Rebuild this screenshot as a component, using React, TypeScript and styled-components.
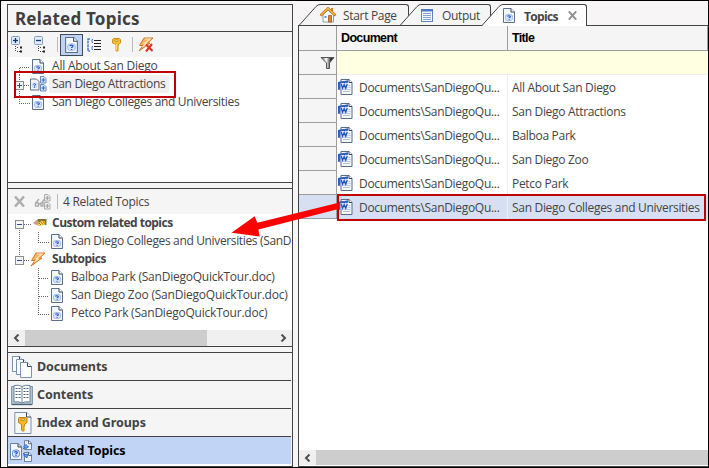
import React from "react";
import styled, { createGlobalStyle, css } from "styled-components";

const LINE = "#434346";
const CHROME = "#f5f5f5";
const RED = "#c00000";

const Global = createGlobalStyle`
  * { box-sizing: border-box; }
  body { margin: 0; background: #000; }
  svg { display: block; flex: none; }
`;

const Window = styled.div`
  position: relative;
  width: 709px;
  height: 468px;
  display: flex;
  gap: 5px;
  padding: 3px 1px 1px 7px;
  border-top: 1px solid #000;
  background: #f8f5f7;
  box-shadow: inset 1px 0 #000, inset -1px 0 #000, inset 0 -1px #000;
  font: 12px "Open Sans", "Noto Sans", sans-serif;
  color: #444;
  overflow: hidden;
`;

/* ---------- icons ---------- */

const TopicIcon = ({ w = 12, h = 15 }: { w?: number; h?: number }) => (
  <svg width={w} height={h} viewBox="0 0 12 15">
    <path d="M.5.5h7.500l3.500 3.500v10.500h-11z" fill="#f4f7fa" stroke="#5b6f88" />
    <path d="M8 .5v3.500h3.500" fill="#fff" stroke="#34485f" />
    <rect x="2.500" y="6.500" width="7" height="6" rx="2" fill="#d5e4fb" stroke="#8fb3ea" strokeWidth=".8" />
    <path d="M4.300 8.300q1.600-1.100 2.900-.2q.6 1-1 1.600v.6M6.100 11.200v.9" fill="none" stroke="#2450c8" strokeWidth="1.100" />
  </svg>
);

const WordIcon = () => (
  <svg width="15" height="16" viewBox="0 0 15 16">
    <path d="M3 .5h8l3 3v12H3z" fill="#f7f9fc" stroke="#586c84" />
    <path d="M11 .5v3h3" fill="#fff" stroke="#34485f" />
    <path d="M5 12.500h7M10 10.500h2.500M10.500 6.500h2M10.500 8.500h2" stroke="#aebfd6" />
    <path d="M0 3l10-1.500v9H0z" fill="#3b70cf" />
    <path d="M0 3l10-1.500v2.300L2.500 4.300V10.500H0z" fill="#2c5cc0" />
    <path d="M2.500 4.300L10 3.800v6.700H2.500z" fill="#dbe7fa" />
    <path d="M3.200 5l1.300 4.300L6.200 5.700l1.500 3.600L9.300 5" fill="none" stroke="#2454b8" strokeWidth="1.300" />
  </svg>
);

const ExpandAllIcon = ({ minus = false }: { minus?: boolean }) => (
  <svg width="13" height="17" viewBox="0 0 13 17">
    <rect x=".5" y=".5" width="8" height="8" rx="1" fill="#e3edfa" stroke="#7f9dc4" />
    <path d="M2 4.500h5" stroke="#12357c" strokeWidth="1.300" />
    {!minus && <path d="M4.500 2v5" stroke="#12357c" strokeWidth="1.300" />}
    <path d="M4 10.500h1M4 12.500h1M4 14.500h1M6 11.500h1M6 15.500h1M8 15.500h1" stroke="#444" />
    <path d="M9 10.500h2v2H9zM9 14.500h2v2H9z" fill="#222" />
  </svg>
);

const ListIcon = () => (
  <svg width="15" height="14" viewBox="0 0 15 14">
    <path d="M3 1H1v12h2" fill="none" stroke="#4e7cc2" strokeWidth="1.500" strokeDasharray="3 .6" />
    <path d="M6 1.500H5v3h1M6 8.500H5v3h1" fill="none" stroke="#5277b0" />
    <path d="M7 2.500h7M7 5.500h7M7 8.500h7M7 11.500h7" stroke="#222" strokeWidth="1.200" />
  </svg>
);

const KeyIcon = () => (
  <svg width="9" height="14" viewBox="0 0 9 14">
    <path d="M1.500.5h6l1 1v3.500l-2 1.500v1.500l-1 1 1 1-1 1 1 1-1.500 1.500-1-1V6.500L.5 5V1.500z" fill="#f8bf28" stroke="#c98a12" strokeWidth=".9" />
    <rect x="3" y="1.800" width="3" height="1.500" rx=".6" fill="#fff6cf" stroke="#9b6a0c" strokeWidth=".6" />
    <path d="M4.300 6v6" stroke="#fff0a6" strokeWidth=".8" />
  </svg>
);

const BoltIcon = ({ crossed = false }: { crossed?: boolean }) => (
  <svg width="16" height="15" viewBox="0 0 16 15">
    <path d="M6 1h9L9.500 6H12L1 14l4-5.500H1.500z" fill="#fcb45c" stroke="#cf6a1e" strokeWidth=".9" />
    <path d="M7 2h5L6.500 6.500 8 7 4.500 10" fill="none" stroke="#ffe7bd" strokeWidth="1.200" />
    {crossed && <path d="M8 7.500l6.500 6.500M14 7l-6 7.500" stroke="#e0301e" strokeWidth="2.100" />}
  </svg>
);

const BranchIcon = ({ gray = false }: { gray?: boolean }) => (
  <svg width="17" height="16" viewBox="0 0 17 16">
    {gray ? (
      <path d="M1.500 9h3v3h-3zM7 9h2v3H7zM4.500 10H7M2 8.500L5 5M8 8.500L10.500 5" fill="none" stroke="#aaa" strokeWidth="1.300" />
    ) : (
      <>
        <path d="M.5 3h6L9 5.500V14H.500z" fill="#f0f4fa" stroke="#5b6f88" />
        <rect x="2" y="7" width="5.500" height="5" rx="1.500" fill="#cfe0fa" />
        <path d="M3.200 8.200q1.500-1 2.300 0q.3 1-1 1.300v1M4.500 11v.8" fill="none" stroke="#2450c8" />
      </>
    )}
    <path d="M10.500.5h3.500l2 2v4.500h-5.500zM10.500 8.500h3.500l2 2v4.500h-5.500z" fill={gray ? "#eee" : "#dce9fa"} stroke={gray ? "#aaa" : "#6887b4"} />
    <path d="M13.300 2v4M11.500 4h3.500M13.300 10v4M11.500 12h3.500" stroke={gray ? "#999" : "#2f62c4"} />
  </svg>
);

const TagIcon = () => (
  <svg width="15" height="10" viewBox="0 0 15 10">
    <path d="M5 1h8v6H8L6 8 1 5z" fill="#d99b28" />
    <path d="M5 1h8v1.500L4 4.500z" fill="#7d7434" />
    <path d="M0 5l4-3 2 2-3 3z" fill="#c9a08c" />
    <path d="M4.500 6.500L9 2.500l3 4.500-5 1z" fill="#fdd85c" />
    <path d="M6 5l2 2M8 4l2 2.500" stroke="#6b4a12" strokeWidth=".7" />
    <path d="M12 1h1.500v6H12z" fill="#3a8f85" />
  </svg>
);

const CloseIcon = ({ size, color }: { size: number; color: string }) => (
  <svg width={size} height={size} viewBox="0 0 11 11">
    <path d="M1 .5l9 10M10 .5l-9 10" stroke={color} strokeWidth="2.500" />
  </svg>
);

const HomeIcon = () => (
  <svg width="16" height="16" viewBox="0 0 16 16">
    <path d="M3 7.500L8 3l5.500 4.500v7.500H3z" fill="#f7f9fc" stroke="#8c9cae" />
    <path d="M11 1h2v4l-2-2z" fill="#d77c1c" />
    <path d="M.5 8.500L8 1.500l7.500 7" fill="none" stroke="#b56a12" strokeWidth="2.600" />
    <path d="M1 8L8 1.500 15 8" fill="none" stroke="#fbbb3c" strokeWidth="1.400" />
    <path d="M8.500 8.500h3v6.500h-3z" fill="#d98a32" stroke="#9a5a14" strokeWidth=".8" />
    <path d="M4.500 9h2v2h-2z" fill="#5f94d8" />
  </svg>
);

const OutputIcon = () => (
  <svg width="12" height="13" viewBox="0 0 12 13">
    <rect x=".5" y=".5" width="11" height="12" fill="#f4f8fe" stroke="#6384bb" />
    <path d="M0 0h12v2.500H0z" fill="#4a78c4" />
    <path d="M2 4.500h8M2 6.500h8M2 8.500h8M2 10.500h8" stroke="#86a5d6" />
  </svg>
);

const FunnelIcon = () => (
  <svg width="15" height="12" viewBox="0 0 15 12">
    <defs>
      <linearGradient id="funnel">
        <stop offset=".1" stopColor="#777" />
        <stop offset=".4" stopColor="#fff" />
        <stop offset=".75" stopColor="#333" />
      </linearGradient>
    </defs>
    <path d="M1 .5h13L9.500 6v5.500h-3V6z" fill="url(#funnel)" stroke="#555" />
  </svg>
);

const DocumentsIcon = () => (
  <svg width="22" height="22" viewBox="0 0 22 22">
    {[[1.5, 0.5], [5.5, 3.5], [9.5, 6.5]].map(([x, y]) => (
      <g key={x} transform={`translate(${x} ${y})`}>
        <path d="M0 0h7l4 4v11H0z" fill="#fafcfe" stroke="#7c92ac" />
        <path d="M7 0v4h4" fill="#fff" stroke="#34485f" />
      </g>
    ))}
  </svg>
);

const BookIcon = () => (
  <svg width="22" height="22" viewBox="0 0 22 22">
    <path d="M.5 2.500h21v18H.500z" fill="#b4c3ce" stroke="#8499aa" />
    <path d="M3 1.500q5-1 8 1 3-2 8-1v16.500q-5-1-8 1-3-2-8-1z" fill="#fff" stroke="#6d879c" />
    <path d="M11 2.500v16" stroke="#6d879c" />
    <path d="M4.500 4.500h5M4.500 7.500h5M4.500 10.500h5M4.500 13.500h5M12.500 4.500h5M12.500 7.500h5M12.500 10.500h5M12.500 13.500h5" stroke="#4b5d70" strokeDasharray="2 1" />
    <path d="M1 20.500h20" stroke="#456277" strokeWidth="1.300" />
  </svg>
);

const KeyPageIcon = () => (
  <svg width="18" height="22" viewBox="0 0 18 22">
    <path d="M.8.5h12L17 5v16.500H.8z" fill="#f5f8fb" stroke="#7c92ac" />
    <path d="M12.500.5V5H17" fill="#fff" stroke="#34485f" />
    <path d="M5 5.500h7l1 1v4l-2.500 2V14l-1 1 1 1-1 1 1 1-1.500 1.500L7.500 18v-5.500L4.500 10.500v-4z" fill="#f9b91d" stroke="#b97810" strokeWidth=".9" />
    <rect x="7" y="7" width="3.500" height="1.500" fill="#fff6cf" stroke="#9b6a0c" strokeWidth=".6" />
  </svg>
);

const RelatedIcon = () => (
  <svg width="22" height="22" viewBox="0 0 22 22">
    <path d="M.5 3.500H8l3.500 3.500V19.500H.5z" fill="#f3f7fc" stroke="#6b819e" />
    <path d="M8 3.500v3.500h3.500" fill="none" stroke="#34485f" />
    <rect x="2.500" y="10" width="7" height="7" rx="2.500" fill="#d5e4fb" stroke="#5f8fdf" />
    <path d="M4.300 12.200q1.600-1 2.900-.1q.5 1-1.200 1.600v.7M6 15v1" fill="none" stroke="#2450c8" strokeWidth="1.200" />
    <path d="M14.500.7h4.500l2.500 2.500v6.300h-7zM14.500 12.500h4.500l2.500 2.500v6.500h-7z" fill="#f3f7fc" stroke="#6b819e" />
    <path d="M18.500.7v3h3M18.500 12.500v3h3" fill="none" stroke="#34485f" strokeWidth=".8" />
    <path d="M13.500 7L16 4.500 18.500 7l-2.500 1.500zM13.500 15l4-1-.5 4z" fill="#6fa0ec" stroke="#2f6fd8" />
    <path d="M13 9l2-2M13 13l2 2" stroke="#2f6fd8" />
  </svg>
);

/* ---------- left side ---------- */

const Sidebar = styled.div`
  width: 286px;
  height: 463px;
  display: flex;
  flex-direction: column;
  border: 1px solid ${LINE};
  background: ${CHROME};
`;

const PanelTitle = styled.div`
  height: 27px;
  flex: none;
  padding-left: 7px;
  border-bottom: 1px solid ${LINE};
  font: bold 17px/28px "Noto Sans", sans-serif;
  letter-spacing: 0.22px;
  color: #3f3f3f;
`;

const Toolbar = styled.div<{ $height: number }>`
  height: ${(p) => p.$height}px;
  flex: none;
  display: flex;
  align-items: center;
  padding-left: 3px;
  letter-spacing: -0.3px;
`;

const ToolButton = styled.div<{ $width: number; $active?: boolean }>`
  width: ${(p) => p.$width}px;
  height: 22px;
  display: flex;
  align-items: center;
  justify-content: center;
  ${(p) =>
    p.$active &&
    css`
      background: #bfd2f5;
      border: 1px solid #424a58;
    `}
`;

const Divider = styled.div<{ $before: number; $after: number }>`
  width: 1px;
  height: 15px;
  margin: 0 ${(p) => p.$after}px 0 ${(p) => p.$before}px;
  background: #bababa;
`;

const Tree = styled.div<{ $height: number }>`
  height: ${(p) => p.$height}px;
  flex: none;
  overflow: hidden;
  background: #fff;
`;

const TreeRow = styled.div`
  height: 18px;
  display: flex;
  align-items: center;
  white-space: nowrap;
`;

const IconCell = styled.div<{ $width: number; $inset: number }>`
  width: ${(p) => p.$width}px;
  padding-left: ${(p) => p.$inset}px;
  flex: none;
`;

const TreeLabel = styled.span<{ $bold?: boolean; $selected?: boolean; $spacing?: number }>`
  height: 18px;
  line-height: 17px;
  padding-left: 3px;
  padding-right: ${(p) => (p.$selected ? 4 : 0)}px;
  margin-left: -3px;
  font-weight: ${(p) => (p.$bold ? 700 : 400)};
  letter-spacing: ${(p) => p.$spacing ?? -0.32}px;
  background: ${(p) => (p.$selected ? "#f0f0f0" : "none")};
`;

const TreeLines = ({ d, width, box }: { d: string; width: number; box?: "+" | "-" }) => (
  <svg width={width} height="18" viewBox={`0 0 ${width} 18`}>
    <path d={d} fill="none" stroke="#666" strokeDasharray="1 1" shapeRendering="crispEdges" />
    {box && (
      <g shapeRendering="crispEdges">
        <rect x="7.500" y="6.500" width="8" height="8" fill="#f4f4f4" stroke="#8d8d8d" />
        <path d={box === "+" ? "M9 10.500h5M11.500 8v5" : "M9 10.500h5"} stroke="#34499c" />
      </g>
    )}
  </svg>
);

const Splitter = styled.div`
  height: 7px;
  flex: none;
  border: solid ${LINE};
  border-width: 1px 0;
`;

const ScrollBar = styled.div<{ $height: number }>`
  height: ${(p) => p.$height}px;
  flex: none;
  display: flex;
  background: #f0f0f0;
`;

const ScrollArrow = styled.div`
  width: 17px;
  display: flex;
  align-items: center;
  justify-content: center;
`;

const ScrollThumb = styled.div<{ $width?: number }>`
  background: #cdcdcd;
  ${(p) => (p.$width ? `width: ${p.$width}px; margin-right: auto;` : "flex: 1;")}
`;

const Chevron = ({ right = false }: { right?: boolean }) => (
  <svg width="7" height="8" viewBox="0 0 7 8">
    <path d={right ? "M1.500.5L5 4 1.500 7.500" : "M5.500.5L2 4l3.500 3.500"} fill="none" stroke="#505050" strokeWidth="2" />
  </svg>
);

const Nav = styled.div`
  flex: 1;
  margin-right: 1px;
  padding-bottom: 2px;
  background: #fff;
`;

const NavItem = styled.div<{ $active?: boolean }>`
  height: 28px;
  display: flex;
  align-items: center;
  border-top: 1px solid ${LINE};
  background: ${(p) => (p.$active ? "#c1d4f5" : CHROME)};
  color: ${(p) => (p.$active ? "#000" : "#434343")};
  font: bold 12.500px "Noto Sans", sans-serif;
  letter-spacing: -0.06px;
  &:first-child { border-top: 0; height: 27px; }
`;

/* ---------- right side ---------- */

const Content = styled.div`
  flex: 1;
  height: 463px;
  display: flex;
  flex-direction: column;
`;

const TabStrip = styled.div`
  height: 22px;
  flex: none;
  display: flex;
  padding-left: 1px;
  background: linear-gradient(${LINE}, ${LINE}) bottom / 100% 1px no-repeat;
`;

const Tab = styled.div`
  height: 22px;
  display: flex;
  & + & { margin-left: -9px; }
`;

const TabBody = styled.div<{ $width: number; $active?: boolean }>`
  width: ${(p) => p.$width}px;
  height: ${(p) => (p.$active ? 22 : 21)}px;
  display: flex;
  align-items: center;
  border: solid ${LINE};
  border-width: 1px 1px 0 0;
  border-radius: 0 3px 0 0;
  background: ${(p) => (p.$active ? "#fff" : CHROME)};
`;

const TabText = styled.span<{ $bold?: boolean; $gap: number }>`
  margin-left: ${(p) => p.$gap}px;
  line-height: 18px;
  padding-top: 2px;
  font-weight: ${(p) => (p.$bold ? 700 : 400)};
  letter-spacing: ${(p) => (p.$bold ? -0.65 : -0.32)}px;
  margin-right: 10px;
`;

const Slant = ({ active = false }: { active?: boolean }) => (
  <svg width="21" height="22" viewBox="0 0 21 22">
    <path d={active ? "M0 22L17 2.500Q19 .5 21 .5V22z" : "M0 21L17 2.500Q19 .5 21 .5V21z"} fill={active ? "#fff" : CHROME} />
    <path d="M0 21.500L17 2.500Q19 .5 21 .5" fill="none" stroke={LINE} />
  </svg>
);

const Grid = styled.div`
  flex: 1;
  display: flex;
  flex-direction: column;
  border: solid ${LINE};
  border-width: 0 0 1px 1px;
  background: #fff;
  padding-bottom: 1px;
`;

const GridRow = styled.div<{ $kind?: "head" | "filter" | "selected" }>`
  height: ${(p) => (p.$kind === "head" ? 25 : 24)}px;
  flex: none;
  display: grid;
  grid-template-columns: 38px 171px 1fr;
  letter-spacing: -0.31px;
  white-space: nowrap;
  background: ${(p) => (p.$kind === "head" ? CHROME : p.$kind === "filter" ? "#ffffe1" : p.$kind === "selected" ? "#d6e0f2" : "#fff")};
  ${(p) =>
    p.$kind === "head" &&
    css`
      font: bold 12.500px "Liberation Sans", Arial, sans-serif;
      letter-spacing: -0.65px;
      color: #000;
    `}
`;

const Gutter = styled.div<{ $selected?: boolean }>`
  display: flex;
  align-items: center;
  justify-content: flex-end;
  padding-right: 1px;
  border: solid #9d9d9d;
  border-width: 0 1px 1px 0;
  background: ${(p) => (p.$selected ? "#d6e0f2" : CHROME)};
`;

const Cell = styled.div<{ $head?: boolean; $inset: number; $filter?: boolean }>`
  display: flex;
  align-items: center;
  gap: 6px;
  padding-left: ${(p) => p.$inset}px;
  border-right: ${(p) => (p.$filter ? 0 : 1)}px solid ${(p) => (p.$head ? "#9d9d9d" : "#ededf0")};
  border-bottom: ${(p) => (p.$head ? "1px solid #9d9d9d" : p.$filter ? "1px solid #ededf0" : "0")};
  &:last-child { ${(p) => !p.$head && "border-right: 0;"} }
`;

const Filler = styled.div`
  flex: 1;
`;

/* ---------- callouts drawn over the window ---------- */

const Highlight = styled.div<{ $x: number; $y: number; $w: number; $h: number }>`
  position: absolute;
  left: ${(p) => p.$x}px;
  top: ${(p) => p.$y}px;
  width: ${(p) => p.$w}px;
  height: ${(p) => p.$h}px;
  border: 2px solid ${RED};
`;

const Arrow = styled.svg`
  position: absolute;
  left: 230px;
  top: 199px;
`;

const titles = [
  "All About San Diego",
  "San Diego Attractions",
  "Balboa Park",
  "San Diego Zoo",
  "Petco Park",
  "San Diego Colleges and Universities",
];

const subtopics = ["Balboa Park", "San Diego Zoo", "Petco Park"];

export default function App() {
  return (
    <Window>
      <Global />
      <Sidebar>
        <PanelTitle>Related Topics</PanelTitle>
        <Toolbar $height={25}>
          <ToolButton $width={13}><ExpandAllIcon /></ToolButton>
          <ToolButton $width={33}><ExpandAllIcon minus /></ToolButton>
          <Divider $before={0} $after={2} />
          <ToolButton $width={23} $active><TopicIcon w={13} h={16} /></ToolButton>
          <ToolButton $width={23}><ListIcon /></ToolButton>
          <ToolButton $width={21}><KeyIcon /></ToolButton>
          <Divider $before={5} $after={5} />
          <BoltIcon crossed />
        </Toolbar>
        <Tree $height={125}>
          <TreeRow>
            <TreeLines width={24} d="M11.500 18V10.500H22" />
            <IconCell $width={20} $inset={0}><TopicIcon /></IconCell>
            <TreeLabel $spacing={-0.21}>All About San Diego</TreeLabel>
          </TreeRow>
          <TreeRow>
            <TreeLines width={22} d="M11.500 0V18M16 10.500h6" box="+" />
            <IconCell $width={22} $inset={0}><BranchIcon /></IconCell>
            <TreeLabel $selected>San Diego Attractions</TreeLabel>
          </TreeRow>
          <TreeRow>
            <TreeLines width={24} d="M11.500 0V10.500H22" />
            <IconCell $width={20} $inset={0}><TopicIcon /></IconCell>
            <TreeLabel>San Diego Colleges and Universities</TreeLabel>
          </TreeRow>
        </Tree>
        <Splitter />
        <Toolbar $height={25}>
          <ToolButton $width={16}><CloseIcon size={11} color="#adadad" /></ToolButton>
          <ToolButton $width={30}><BranchIcon gray /></ToolButton>
          <Divider $before={0} $after={5} />
          4 Related Topics
        </Toolbar>
        <Tree $height={116}>
          <TreeRow>
            <TreeLines width={24} d="M11.500 14V18M16 10.500h8" box="-" />
            <IconCell $width={20} $inset={1}><TagIcon /></IconCell>
            <TreeLabel $bold $spacing={-0.52}>Custom related topics</TreeLabel>
          </TreeRow>
          <TreeRow>
            <TreeLines width={43} d="M11.500 0V18M30.500 0V10.500H41" />
            <IconCell $width={20} $inset={0}><TopicIcon /></IconCell>
            <TreeLabel $spacing={-0.35}>San Diego Colleges and Universities (SanD</TreeLabel>
          </TreeRow>
          <TreeRow>
            <TreeLines width={22} d="M11.500 0V6M16 10.500h6" box="-" />
            <IconCell $width={22} $inset={0}><BoltIcon /></IconCell>
            <TreeLabel $bold $spacing={-0.45}>Subtopics</TreeLabel>
          </TreeRow>
          {subtopics.map((name, i) => (
            <TreeRow key={name}>
              <TreeLines width={43} d={i < 2 ? "M30.500 0V18M31 10.500H41" : "M30.500 0V10.500H41"} />
              <IconCell $width={20} $inset={0}><TopicIcon /></IconCell>
              <TreeLabel $spacing={-0.22}>{name} (SanDiegoQuickTour.doc)</TreeLabel>
            </TreeRow>
          ))}
        </Tree>
        <ScrollBar $height={16}>
          <ScrollArrow><Chevron /></ScrollArrow>
          <ScrollThumb $width={182} />
          <ScrollArrow><Chevron right /></ScrollArrow>
        </ScrollBar>
        <Splitter />
        <Nav>
          <NavItem><IconCell $width={29} $inset={3}><DocumentsIcon /></IconCell>Documents</NavItem>
          <NavItem><IconCell $width={29} $inset={3}><BookIcon /></IconCell>Contents</NavItem>
          <NavItem><IconCell $width={29} $inset={6}><KeyPageIcon /></IconCell>Index and Groups</NavItem>
          <NavItem $active><IconCell $width={29} $inset={2}><RelatedIcon /></IconCell>Related Topics</NavItem>
        </Nav>
      </Sidebar>

      <Content>
        <TabStrip>
          <Tab>
            <Slant />
            <TabBody $width={89}><HomeIcon /><TabText $gap={7}>Start Page</TabText></TabBody>
          </Tab>
          <Tab>
            <Slant />
            <TabBody $width={70}><OutputIcon /><TabText $gap={9}>Output</TabText></TabBody>
          </Tab>
          <Tab>
            <Slant active />
            <TabBody $width={84} $active>
              <TopicIcon w={12} h={15} />
              <TabText $gap={9} $bold>Topics</TabText>
              <CloseIcon size={9} color="#929292" />
            </TabBody>
          </Tab>
        </TabStrip>
        <Grid>
          <GridRow $kind="head">
            <Gutter />
            <Cell $head $inset={4}>Document</Cell>
            <Cell $head $inset={4}>Title</Cell>
          </GridRow>
          <GridRow $kind="filter">
            <Gutter><FunnelIcon /></Gutter>
            <Cell $filter $inset={0} />
            <Cell $filter $inset={0} />
          </GridRow>
          {titles.map((title, i) => {
            const selected = i === titles.length - 1;
            return (
              <GridRow key={title} $kind={selected ? "selected" : undefined}>
                <Gutter $selected={selected} />
                <Cell $inset={1}><WordIcon />Documents\SanDiegoQu...</Cell>
                <Cell $inset={4}>{title}</Cell>
              </GridRow>
            );
          })}
          <Filler />
          <ScrollBar $height={15}>
            <ScrollArrow><Chevron /></ScrollArrow>
            <ScrollThumb />
          </ScrollBar>
        </Grid>
      </Content>

      <Highlight $x={14} $y={70} $w={162} $h={27} />
      <Highlight $x={337} $y={193} $w={369} $h={27} />
      <Arrow width="112" height="40" viewBox="230 200 112 40">
        <path d="M231.500 232.700L254.700 216.300 257.300 222.700 338.500 202.700V209L258.500 229.500 259.500 236.500z" fill="#fe0000" />
      </Arrow>
    </Window>
  );
}
